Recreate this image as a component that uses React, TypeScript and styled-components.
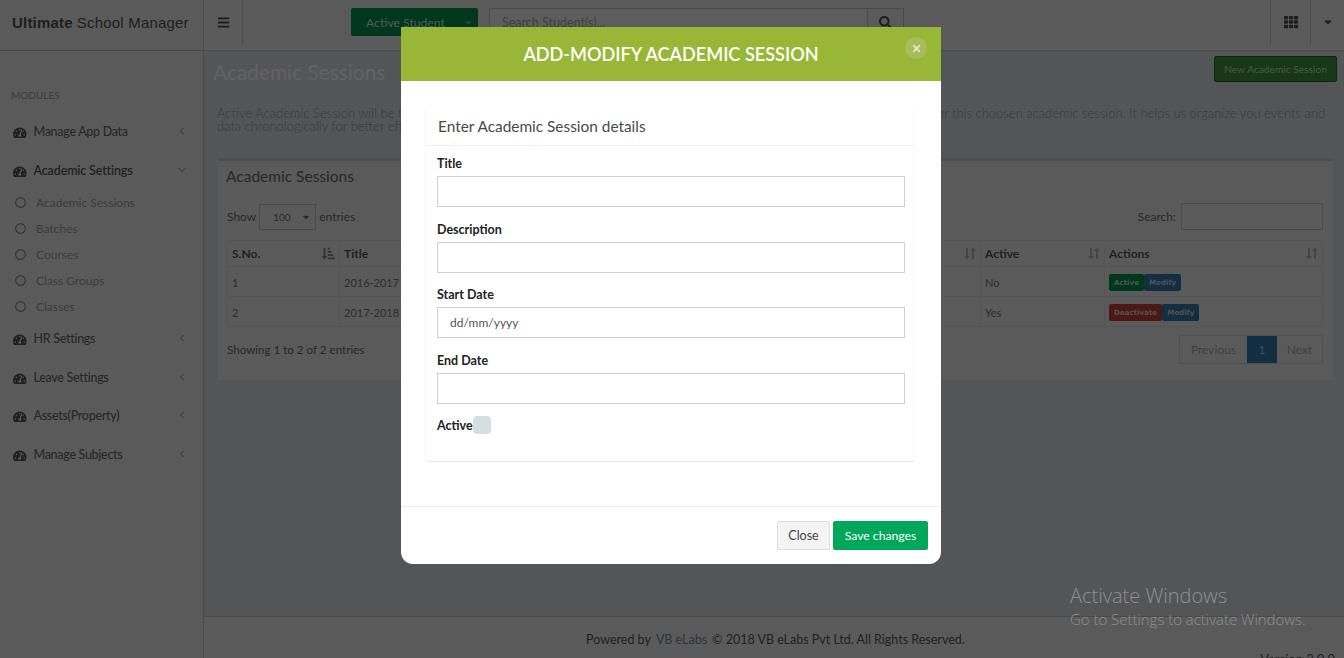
import React from "react";
import styled, { createGlobalStyle } from "styled-components";
import {
  FaTachometerAlt, FaRegCircle, FaBars, FaTh, FaSearch,
  FaCaretDown, FaTimes, FaSortAmountDownAlt,
} from "react-icons/fa";
import { ChevronLeft, ChevronDown } from "lucide-react";

const Global = createGlobalStyle`
  html, body { margin: 0; padding: 0; height: 100%; overflow: hidden; }
  body { font-family: "Lato", "Liberation Sans", sans-serif; font-size: 13px; color: #525252; }
  * { box-sizing: border-box; }
`;

const Page = styled.div`
  position: relative;
  width: 1344px;
  height: 658px;
  overflow: hidden;
  background: #bbbdc1;
  display: grid;
  grid-template-columns: 204px 1fr;
  grid-template-rows: 51px 1fr;
`;

const Header = styled.header`
  grid-column: 1 / 3;
  display: flex;
  align-items: stretch;
  background: #c8c8c8;
  border-bottom: 1px solid #a4a4a4;
`;
const Brand = styled.div`
  width: 204px;
  padding: 0 0 5px 12px;
  border-right: 1px solid #a4a4a4;
  display: flex;
  align-items: center;
  gap: 4px;
  font-family: "Liberation Sans", sans-serif;
  font-size: 15px;
  letter-spacing: 0.2px;
  color: #454545;
  b { font-weight: 700; }
`;
const MenuToggle = styled.div`
  width: 39px;
  height: 44px;
  border-right: 1px solid #a4a4a4;
  display: flex;
  align-items: center;
  justify-content: center;
  font-size: 13px;
  color: #404040;
`;
const StudentSelect = styled.div`
  margin: 8px 0 0 108px;
  width: 127px;
  height: 28px;
  background: #007c41;
  border-radius: 2px;
  color: #b4c8bc;
  display: flex;
  align-items: center;
  padding: 0 4px 0 15px;
  justify-content: space-between;
  font-size: 12.2px;
`;
const SearchGroup = styled.div`
  margin: 8px 0 0 11px;
  display: flex;
  height: 28px;
`;
const SearchInput = styled.div`
  width: 379px;
  border: 1px solid #a4a4a4;
  background: #cfcfcf;
  padding: 6px 12px;
  font-size: 12.5px;
  color: #8d8d8d;
`;
const SearchButton = styled.div`
  width: 36px;
  border: 1px solid #a4a4a4;
  border-left: 0;
  display: flex;
  align-items: center;
  justify-content: center;
  color: #404040;
  font-size: 13px;
`;
const HeaderRight = styled.div`
  margin-left: auto;
  display: flex;
`;
const HeaderCell = styled.div<{ $w: number }>`
  width: ${(p) => p.$w}px;
  height: 44px;
  border-left: 1px solid #a4a4a4;
  display: flex;
  align-items: center;
  justify-content: center;
  color: #404040;
  font-size: 14px;
`;

const Sidebar = styled.aside`
  background: #c8c8c8;
  border-right: 1px solid #a4a4a4;
  padding-top: 38px;
`;
const SectionLabel = styled.div`
  font-size: 10px;
  color: #828282;
  padding-left: 11px;
  margin-bottom: 23px;
  line-height: 12px;
`;
const NavItem = styled.div<{ $h: number; $active?: boolean }>`
  height: ${(p) => p.$h}px;
  display: flex;
  align-items: flex-start;
  padding-left: 13px;
  font-size: 12.5px;
  letter-spacing: ${(p) => (p.$active ? "-0.15px" : "-0.3px")};
  font-weight: ${(p) => (p.$active ? 600 : 500)};
  color: ${(p) => (p.$active ? "#484848" : "#585858")};
  line-height: 16px;
  > svg { font-size: 13.5px; margin: 2px 7px 0 0; color: #484848; }
`;
const NavChevron = styled.span`
  margin: 1px 15px 0 auto;
  height: 12px;
  display: flex;
  align-items: flex-start;
  color: #6a6a6a;
`;
const SubItem = styled.div`
  height: 26px;
  display: flex;
  align-items: center;
  padding-left: 15px;
  gap: 10px;
  font-size: 12px;
  color: #858585;
  svg { font-size: 11px; color: #6c6c6c; }
`;
const SubList = styled.div`
  margin-bottom: 12px;
`;

const Main = styled.main`
  display: flex;
  flex-direction: column;
  min-height: 0;
`;
const Content = styled.div`
  flex: 1;
  padding: 5px 7px 0 9px;
  position: relative;
`;
const TitleRow = styled.div`
  display: flex;
  justify-content: space-between;
  align-items: flex-start;
`;
const PageTitle = styled.h1`
  margin: 4px 0 0;
  font-size: 20.8px;
  line-height: 24px;
  font-weight: 500;
  color: #d8d8d8;
`;
const NewButton = styled.div`
  width: 123px;
  height: 26px;
  margin-right: 1px;
  background: #347a34;
  border: 1px solid #245224;
  border-radius: 2px;
  color: #a4c0a4;
  font-size: 10.2px;
  display: flex;
  align-items: center;
  justify-content: center;
`;
const Intro = styled.p`
  margin: 23px 8px 0 4px;
  font-size: 13px;
  line-height: 13px;
  font-weight: 300;
  color: #7c7c7c;
`;
const Panel = styled.section`
  margin: 25px 5px 0 5px;
  height: 222px;
  background: #c8c8c8;
  border-top: 3px solid #aeaeae;
  padding: 5px 10px 0 8px;
`;
const PanelTitle = styled.h2`
  margin: 0;
  font-size: 15.5px;
  line-height: 20px;
  font-weight: 400;
  color: #585858;
`;
const Controls = styled.div`
  margin-top: 17px;
  display: flex;
  justify-content: space-between;
  align-items: center;
  height: 27px;
  font-size: 12px;
  padding-left: 1px;
`;
const ControlGroup = styled.div`
  display: flex;
  align-items: center;
  gap: 3px;
  color: #585858;
`;
const PageSelect = styled.div`
  width: 57px;
  height: 26px;
  border: 1px solid #a4a4a4;
  display: flex;
  align-items: center;
  justify-content: space-between;
  padding: 0 4px 0 13px;
  font-size: 10px;
  color: #5c5c5c;
`;
const FilterBox = styled.div`
  width: 142px;
  height: 27px;
  border: 1px solid #a4a4a4;
  margin-left: 2px;
`;
const Grid = styled.table`
  margin: 10px 0 0 1px;
  width: 1095px;
  border-collapse: collapse;
  table-layout: fixed;
  font-size: 11px;
  color: #646464;
`;
const Th = styled.th<{ $w: number }>`
  width: ${(p) => p.$w}px;
  height: 26px;
  border: 1px solid #bcbcbc;
  text-align: left;
  padding: 0 4px;
  font-size: 12px;
  font-weight: 700;
  color: #484848;
`;
const ThInner = styled.div<{ $sorted?: boolean }>`
  display: flex;
  justify-content: space-between;
  align-items: center;
  svg { color: ${(p) => (p.$sorted ? "#6a6a6a" : "#9a9a9a")}; font-size: 13px; }
`;
const Td = styled.td`
  height: 30px;
  border: 1px solid #bcbcbc;
  padding: 1px 4px 0;
`;
const Badge = styled.span<{ $bg: string }>`
  display: inline-block;
  height: 17px;
  line-height: 17px;
  padding: 0 5px;
  background: ${(p) => p.$bg};
  border-radius: 2px;
  font-family: "DejaVu Sans", sans-serif;
  font-size: 7.1px;
  font-weight: 700;
  color: #aeb6b6;
  vertical-align: middle;
`;
const TableFooter = styled.div`
  margin-top: 8px;
  display: flex;
  justify-content: space-between;
  align-items: center;
  font-size: 11.6px;
  color: #585858;
  padding-left: 1px;
`;
const Pager = styled.div`
  display: flex;
  height: 29px;
  border: 1px solid #b0b0b0;
  border-radius: 2px;
`;
const PagerItem = styled.div<{ $current?: boolean; $w: number }>`
  width: ${(p) => p.$w}px;
  display: flex;
  align-items: center;
  justify-content: center;
  font-size: 12px;
  background: ${(p) => (p.$current ? "#2a6496" : "transparent")};
  color: ${(p) => (p.$current ? "#98aebc" : "#8c8c8c")};
`;
const Footer = styled.footer`
  height: 42px;
  border-top: 1px solid #a4a4a4;
  background: #c8c8c8;
  position: relative;
  padding: 14px 0 0 382px;
  font-size: 12.5px;
  color: #484848;
  line-height: 18px;
  span { color: #5c7590; margin: 0 5px; }
`;
const Version = styled.div`
  position: absolute;
  right: 10px;
  top: 33px;
  font-size: 13px;
`;

const Backdrop = styled.div`
  position: absolute;
  inset: 0;
  background: rgba(0, 0, 0, 0.55);
`;
const Modal = styled.div`
  position: absolute;
  left: 401px;
  top: 27px;
  width: 540px;
  height: 537px;
  background: #fff;
  border-radius: 0 0 12px 12px;
  display: flex;
  flex-direction: column;
  overflow: hidden;
`;
const ModalHead = styled.div`
  position: relative;
  height: 54px;
  background: #98b736;
  color: #fff;
  font-size: 18.1px;
  font-weight: 600;
  display: flex;
  align-items: center;
  justify-content: center;
  padding-bottom: 1px;
`;
const CloseDot = styled.div`
  position: absolute;
  right: 14px;
  top: 10px;
  width: 22px;
  height: 22px;
  border-radius: 50%;
  background: #a6bd5a;
  color: #dfe8c0;
  display: flex;
  align-items: center;
  justify-content: center;
  font-size: 11px;
`;
const ModalBody = styled.div`
  flex: 1;
  padding: 27px 27px 0 25px;
`;
const Card = styled.div`
  height: 353px;
  border-radius: 3px;
  box-shadow: 0 1px 2px rgba(0, 0, 0, 0.1), 0 0 1px rgba(0, 0, 0, 0.05);
`;
const CardTitle = styled.div`
  height: 38px;
  padding: 8px 12px 0;
  border-bottom: 1px solid #f1f1f1;
  font-size: 15.4px;
  line-height: 20px;
  color: #4a4a4a;
`;
const CardBody = styled.div`
  padding: 10px 9px 0 11px;
`;
const Field = styled.div`
  height: 65.5px;
`;
const Label = styled.label`
  display: block;
  font-size: 12.5px;
  font-weight: 700;
  line-height: 16px;
  color: #222;
  margin-bottom: 4px;
`;
const TextInput = styled.div`
  height: 31px;
  border: 1px solid #cfcfcf;
  padding: 0 12px;
  font-size: 12px;
  line-height: 30px;
  color: #555;
`;
const CheckRow = styled.div`
  display: flex;
  align-items: center;
  margin-top: -2px;
  height: 18px;
  font-size: 12.5px;
  font-weight: 700;
  color: #222;
`;
const Check = styled.span`
  width: 18px;
  height: 18px;
  background: #d8dde0;
  border-radius: 4px;
`;
const ModalFooter = styled.div`
  height: 58px;
  border-top: 1px solid #efefef;
  display: flex;
  justify-content: flex-end;
  align-items: flex-start;
  gap: 3px;
  padding: 14px 13px 0 0;
`;
const CloseButton = styled.div`
  width: 53px;
  height: 29px;
  background: #f4f4f4;
  border: 1px solid #ddd;
  border-radius: 2px;
  display: flex;
  align-items: center;
  justify-content: center;
  font-size: 12.5px;
  color: #444;
`;
const SaveButton = styled.div`
  width: 95px;
  height: 29px;
  background: #00a65a;
  border-radius: 2px;
  display: flex;
  align-items: center;
  justify-content: center;
  font-size: 12.2px;
  color: #fff;
`;
const Watermark = styled.div`
  position: absolute;
  left: 1070px;
  top: 583px;
  font-family: "Open Sans", sans-serif;
  color: #909090;
  font-weight: 300;
`;
const WatermarkBig = styled.div`
  font-size: 20px;
  line-height: 26px;
`;
const WatermarkSmall = styled.div`
  font-size: 14.95px;
  line-height: 20px;
`;

const SortBoth = () => (
  <svg width="13" height="13" viewBox="0 0 13 13" fill="currentColor">
    <path d="M3 1h2v8h2L4 12.5 1 9h2z" />
    <path d="M9 12h2V4h2L10 .5 7 4h2z" />
  </svg>
);

const subs = ["Academic Sessions", "Batches", "Courses", "Class Groups", "Classes"];
const navBottom = [
  { label: "HR Settings", h: 39 },
  { label: "Leave Settings", h: 38 },
  { label: "Assets(Property)", h: 39 },
  { label: "Manage Subjects", h: 39 },
];
const columns = [
  { t: "S.No.", w: 112 },
  { t: "Title", w: 200 },
  { t: "Description", w: 200 },
  { t: "Start Date", w: 120 },
  { t: "End Date", w: 121 },
  { t: "Active", w: 124 },
  { t: "Actions", w: 218 },
];
const rows = [
  { n: 1, title: "2016-2017", active: "No", a: "Active", c: "#007c44" },
  { n: 2, title: "2017-2018", active: "Yes", a: "Deactivate", c: "#a8362a" },
];

export default function App() {
  return (
    <Page>
      <Global />
      <Header>
        <Brand><b>Ultimate</b> School Manager</Brand>
        <MenuToggle><FaBars /></MenuToggle>
        <StudentSelect>Active Student <FaCaretDown size={11} color="#6f8f80" /></StudentSelect>
        <SearchGroup>
          <SearchInput>Search Student(s)...</SearchInput>
          <SearchButton><FaSearch /></SearchButton>
        </SearchGroup>
        <HeaderRight>
          <HeaderCell $w={40}><FaTh /></HeaderCell>
          <HeaderCell $w={35}><FaCaretDown size={12} /></HeaderCell>
        </HeaderRight>
      </Header>
      <Sidebar>
        <SectionLabel>MODULES</SectionLabel>
        <NavItem $h={39}>
          <FaTachometerAlt />Manage App Data
          <NavChevron><ChevronLeft size={12} strokeWidth={2} /></NavChevron>
        </NavItem>
        <NavItem $h={26} $active>
          <FaTachometerAlt />Academic Settings
          <NavChevron><ChevronDown size={12} strokeWidth={2} /></NavChevron>
        </NavItem>
        <SubList>
          {subs.map((s) => (
            <SubItem key={s}><FaRegCircle />{s}</SubItem>
          ))}
        </SubList>
        {navBottom.map((n) => (
          <NavItem key={n.label} $h={n.h}>
            <FaTachometerAlt />{n.label}
            <NavChevron><ChevronLeft size={12} strokeWidth={2} /></NavChevron>
          </NavItem>
        ))}
      </Sidebar>
      <Main>
        <Content>
          <TitleRow>
            <PageTitle>Academic Sessions</PageTitle>
            <NewButton>New Academic Session</NewButton>
          </TitleRow>
          <Intro>
            Active Academic Session will be the sessions under which all the data of your school will be stored, all records and events fall under this choosen academic session. It helps us organize you events and data chronologically for better efficiency and reporting across the whole application.
          </Intro>
          <Panel>
            <PanelTitle>Academic Sessions</PanelTitle>
            <Controls>
              <ControlGroup>
                Show <PageSelect>100 <FaCaretDown size={10} /></PageSelect> entries
              </ControlGroup>
              <ControlGroup>
                Search: <FilterBox />
              </ControlGroup>
            </Controls>
            <Grid>
              <thead>
                <tr>
                  {columns.map((c, i) => (
                    <Th key={c.t} $w={c.w}>
                      <ThInner $sorted={i === 0}>{c.t}{i === 0 ? <FaSortAmountDownAlt /> : <SortBoth />}</ThInner>
                    </Th>
                  ))}
                </tr>
              </thead>
              <tbody>
                {rows.map((r) => (
                  <tr key={r.n}>
                    <Td>{r.n}</Td>
                    <Td>{r.title}</Td>
                    <Td />
                    <Td />
                    <Td />
                    <Td>{r.active}</Td>
                    <Td>
                      <Badge $bg={r.c}>{r.a}</Badge>
                      <Badge $bg="#28668e">Modify</Badge>
                    </Td>
                  </tr>
                ))}
              </tbody>
            </Grid>
            <TableFooter>
              Showing 1 to 2 of 2 entries
              <Pager>
                <PagerItem $w={67}>Previous</PagerItem>
                <PagerItem $w={30} $current>1</PagerItem>
                <PagerItem $w={45}>Next</PagerItem>
              </Pager>
            </TableFooter>
          </Panel>
        </Content>
        <Footer>
          Powered by<span>VB eLabs</span>© 2018 VB eLabs Pvt Ltd. All Rights Reserved.
          <Version>Version 2.0.0</Version>
        </Footer>
      </Main>
      <Backdrop />
      <Modal>
        <ModalHead>
          ADD-MODIFY ACADEMIC SESSION
          <CloseDot><FaTimes /></CloseDot>
        </ModalHead>
        <ModalBody>
          <Card>
            <CardTitle>Enter Academic Session details</CardTitle>
            <CardBody>
              <Field><Label>Title</Label><TextInput /></Field>
              <Field><Label>Description</Label><TextInput /></Field>
              <Field><Label>Start Date</Label><TextInput>dd/mm/yyyy</TextInput></Field>
              <Field><Label>End Date</Label><TextInput /></Field>
              <CheckRow>Active<Check /></CheckRow>
            </CardBody>
          </Card>
        </ModalBody>
        <ModalFooter>
          <CloseButton>Close</CloseButton>
          <SaveButton>Save changes</SaveButton>
        </ModalFooter>
      </Modal>
      <Watermark>
        <WatermarkBig>Activate Windows</WatermarkBig>
        <WatermarkSmall>Go to Settings to activate Windows.</WatermarkSmall>
      </Watermark>
    </Page>
  );
}
